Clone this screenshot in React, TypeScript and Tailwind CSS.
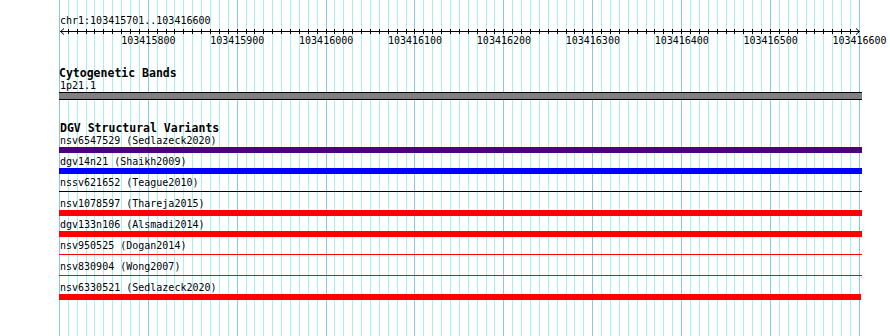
const START = 103415700;
const PX_PER_BP = 0.8889;
const LEFT = 59.4;

const gridLines = Array.from({ length: 91 }, (_, i) => ({
  x: Math.floor(LEFT + i * 10 * PX_PER_BP),
  major: i % 10 === 0,
}));

const labels = Array.from({ length: 9 }, (_, i) => {
  const bp = START + (i + 1) * 100;
  return { bp, x: (i + 1) * 100 * PX_PER_BP };
});

type Variant = {
  name: string;
  color: string;
  thin?: boolean;
  short?: boolean;
};

const variants: Variant[] = [
  { name: "nsv6547529 (Sedlazeck2020)", color: "bg-[#4b0082]" },
  { name: "dgv14n21 (Shaikh2009)", color: "bg-[#0000ff]" },
  { name: "nssv621652 (Teague2010)", color: "bg-black", thin: true },
  { name: "nsv1078597 (Thareja2015)", color: "bg-[#ff0000]" },
  { name: "dgv133n106 (Alsmadi2014)", color: "bg-[#ff0000]" },
  { name: "nsv950525 (Dogan2014)", color: "bg-[#ff0000]", thin: true },
  { name: "nsv830904 (Wong2007)", color: "bg-[#ff0000]", thin: true },
  { name: "nsv6330521 (Sedlazeck2020)", color: "bg-[#ff0000]", short: true },
];

function Grid() {
  return (
    <svg
      className="absolute inset-0"
      width={890}
      height={336}
      shapeRendering="crispEdges"
    >
      {gridLines.map((g, i) => (
        <rect
          key={i}
          x={g.x}
          y={0}
          width={1}
          height={336}
          fill={g.major ? "#8ac6ea" : "#aaeeee"}
        />
      ))}
    </svg>
  );
}

function Ruler() {
  return (
    <div>
      <div className="mt-[15px] h-[12px] pl-px text-[10px] leading-[12px]">
        chr1:103415701..103416600
      </div>
      <svg width={803} height={8} shapeRendering="crispEdges" className="block">
        <line x1={1} y1={4.5} x2={801} y2={4.5} stroke="black" />
        {gridLines.slice(1, 90).map((g, i) => (
          <line
            key={i}
            x1={g.x - 59 + 0.5}
            y1={2}
            x2={g.x - 59 + 0.5}
            y2={7}
            stroke="black"
          />
        ))}
        <polyline
          points="5,1.5 1.5,4.5 5,7.5"
          fill="none"
          stroke="black"
          shapeRendering="auto"
        />
        <polyline
          points="797,1.5 800.5,4.5 797,7.5"
          fill="none"
          stroke="black"
          shapeRendering="auto"
        />
      </svg>
      <div className="relative h-[12px] text-[10px] leading-[12px]">
        {labels.map((l) => (
          <span
            key={l.bp}
            className="absolute top-0 -translate-x-1/2 whitespace-nowrap"
            style={{ left: l.x + 0.5 }}
          >
            {l.bp}
          </span>
        ))}
      </div>
    </div>
  );
}

export default function App() {
  return (
    <div className="relative w-[890px] h-[336px] overflow-hidden bg-white text-black font-['DejaVu_Sans_Mono',monospace]">
      <Grid />
      <div className="relative ml-[59px] w-[803px]">
        <Ruler />

        {/* Cytogenetic bands */}
        <div className="mt-[19px] h-[14px] text-[11.5px] leading-[14px] font-bold">
          Cytogenetic Bands
        </div>
        <div className="h-[12px] pl-px text-[10px] leading-[12px]">1p21.1</div>
        <div className="h-[8px] border-y border-black bg-[#808080]" />

        {/* DGV structural variants */}
        <div className="mt-[21px] h-[14px] pl-px text-[11.5px] leading-[14px] font-bold">
          DGV Structural Variants
        </div>
        {variants.map((v) => (
          <div key={v.name} className="h-[21px]">
            <div className="h-[12px] pl-px text-[10px] leading-[12px] whitespace-nowrap">
              {v.name}
            </div>
            <div className="flex h-[6px] flex-col">
              {v.thin ? (
                <div className={`mt-[2px] h-px ${v.color}`} />
              ) : (
                <div className={`h-[6px] ${v.color} ${v.short ? "w-[802px]" : "w-full"}`} />
              )}
            </div>
          </div>
        ))}
      </div>
    </div>
  );
}
